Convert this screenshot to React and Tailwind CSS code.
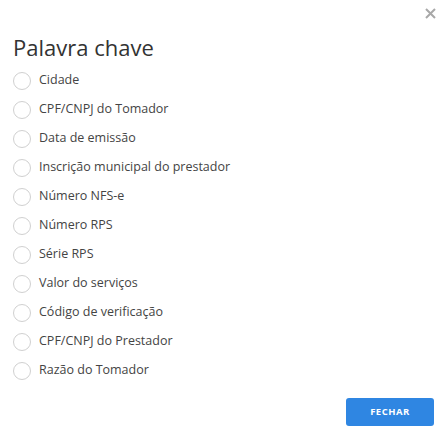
import React from 'react';

const OPTIONS = [
  'Cidade',
  'CPF/CNPJ do Tomador',
  'Data de emissão',
  'Inscrição municipal do prestador',
  'Número NFS-e',
  'Número RPS',
  'Série RPS',
  'Valor do serviços',
  'Código de verificação',
  'CPF/CNPJ do Prestador',
  'Razão do Tomador',
];

const App = () => {
  return (
    <div className="relative w-[448px] h-[441px] bg-white font-['Open_Sans',sans-serif] text-[#333]">
      <button className="absolute right-[11px] top-[7px] w-[13px] h-[13px] flex items-center justify-center">
        <svg width="11" height="11" viewBox="0 0 11 11" stroke="#a8a8a8" strokeWidth="2">
          <path d="M1 1 L10 10 M10 1 L1 10" />
        </svg>
      </button>

      <div className="pt-[32px] px-[13px]">
        <h1 className="text-[22px] leading-[30px] font-normal text-[#333] mb-[4px]">Palavra chave</h1>
        <div className="flex flex-col">
          {OPTIONS.map((o) => (
            <label key={o} className="flex items-center h-[29px] gap-[8px]">
              <span className="w-[18px] h-[18px] rounded-full border border-[#d0d0d0] bg-white shrink-0" />
              <span className="text-[12.5px] text-[#444]">{o}</span>
            </label>
          ))}
        </div>
      </div>

      <div className="flex justify-end pr-[14px] mt-[13px]">
        <button className="w-[88px] h-[28px] rounded-[3px] bg-[#2f86e2] text-white text-[9.5px] font-bold tracking-[0.5px]">
          FECHAR
        </button>
      </div>
    </div>
  );
};

export default App;
